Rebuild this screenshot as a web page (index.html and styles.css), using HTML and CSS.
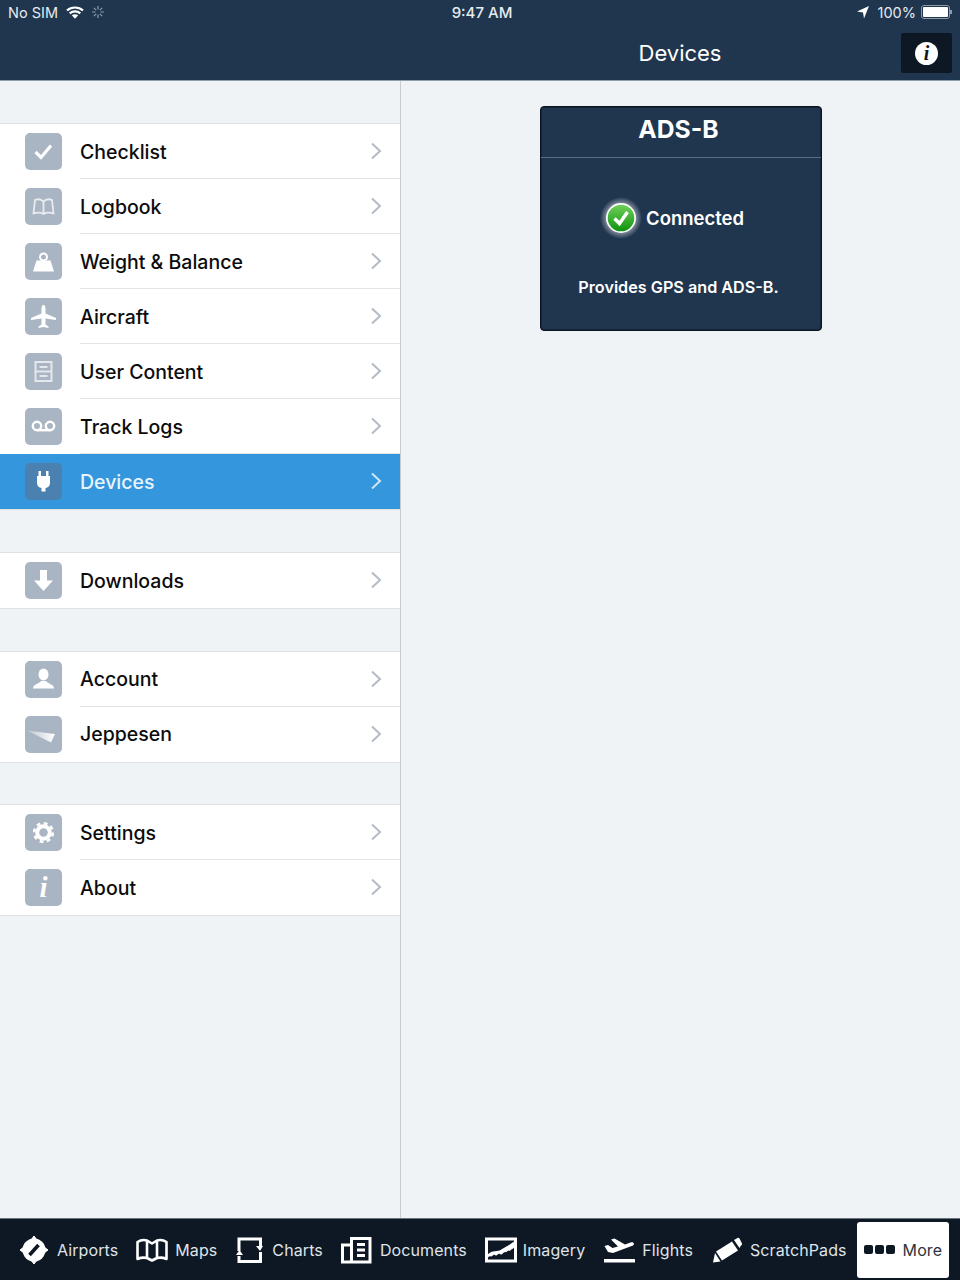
FILE: index.html
```html
<!DOCTYPE html>
<html>
<head>
	<meta charset="utf-8"/>
	<title>Devices</title>
	<link rel="stylesheet" href="styles.css">
</head>
<body>
	<div class="topbar">
		<div class="status">
			<div class="status-left">
				<span>No SIM</span>
				<svg class="wifi" width="18" height="13" viewBox="0 0 18 13"><path d="M1 4.500C5.500 .5 12.500 .5 17 4.500M3.700 7.300C6.700 4.800 11.300 4.800 14.300 7.300" fill="none" stroke="#fff" stroke-width="2.200"/><path d="M5.800 9.300C7.800 7.800 10.200 7.800 12.200 9.300L9 12.800Z" fill="#fff"/></svg>
				<svg class="spinner" width="14" height="14" viewBox="0 0 14 14"><path d="M7 1V4.500M7 9.500V13M1 7H4.500M9.500 7H13M2.800 2.800L5.200 5.200M8.800 8.800L11.200 11.200M2.800 11.200L5.200 8.800M8.800 5.200L11.200 2.800" fill="none" stroke="#8b9aaa" stroke-width="1.200"/></svg>
			</div>
			<div class="status-time">9:47 AM</div>
			<div class="status-right">
				<svg width="14" height="14" viewBox="0 0 14 14"><path d="M13 1L1 6.500L7 7.500L8 13.500Z" fill="#fff"/></svg>
				<span>100%</span>
				<div class="battery"><div class="battery-fill"></div></div>
			</div>
		</div>
		<div class="navbar">
			<div class="nav-pane">
				<div></div>
				<div class="nav-title">Devices</div>
				<div class="info-btn"><span class="info-dot">i</span></div>
			</div>
		</div>
	</div>

	<div class="main">
		<div class="sidebar">
			<div class="group">
				<div class="row">
					<div class="tile"><svg width="37" height="37" viewBox="0 0 37 37"><path d="M10.500 19L16 24.500L26 12.500" fill="none" stroke="#fff" stroke-width="3.200"/></svg></div>
					<div class="label">Checklist</div>
					<svg class="chev" width="12" height="18" viewBox="0 0 12 18"><path d="M2 1.500L10 9L2 16.500" fill="none" stroke="#b3bbc5" stroke-width="2"/></svg>
				</div>
				<div class="row">
					<div class="tile"><svg width="37" height="37" viewBox="0 0 37 37"><path d="M18.500 13.500C16 11 12.500 11 10 12L8.500 25.500C12 24.500 16 24.500 18.500 26C21 24.500 25 24.500 28.500 25.500L27 12C24.500 11 21 11 18.500 13.500ZM18.500 13.500V26" fill="none" stroke="#e8ebef" stroke-width="1.800"/></svg></div>
					<div class="label">Logbook</div>
					<svg class="chev" width="12" height="18" viewBox="0 0 12 18"><path d="M2 1.500L10 9L2 16.500" fill="none" stroke="#b3bbc5" stroke-width="2"/></svg>
				</div>
				<div class="row">
					<div class="tile"><svg width="37" height="37" viewBox="0 0 37 37"><circle cx="18.500" cy="14" r="3.500" fill="none" stroke="#fff" stroke-width="2"/><path d="M11.500 17.500H25.500L29 28.500H8Z" fill="#fff"/></svg></div>
					<div class="label">Weight &amp; Balance</div>
					<svg class="chev" width="12" height="18" viewBox="0 0 12 18"><path d="M2 1.500L10 9L2 16.500" fill="none" stroke="#b3bbc5" stroke-width="2"/></svg>
				</div>
				<div class="row">
					<div class="tile"><svg width="37" height="37" viewBox="0 0 37 37"><path d="M18.500 7C20 7 20.500 9 20.500 11V15.500L31 20V22L20.500 20.500V26.500L23.500 28.500V30L18.500 29L13.500 30V28.500L16.500 26.500V20.500L6 22V20L16.500 15.500V11C16.500 9 17 7 18.500 7Z" fill="#fff"/></svg></div>
					<div class="label">Aircraft</div>
					<svg class="chev" width="12" height="18" viewBox="0 0 12 18"><path d="M2 1.500L10 9L2 16.500" fill="none" stroke="#b3bbc5" stroke-width="2"/></svg>
				</div>
				<div class="row">
					<div class="tile"><svg width="37" height="37" viewBox="0 0 37 37"><rect x="10.500" y="9" width="16" height="19" fill="none" stroke="#e4e8ec" stroke-width="2"/><path d="M10.500 18.500H26.500M14.500 14H22.500M14.500 23H22.500" fill="none" stroke="#e4e8ec" stroke-width="1.800"/></svg></div>
					<div class="label">User Content</div>
					<svg class="chev" width="12" height="18" viewBox="0 0 12 18"><path d="M2 1.500L10 9L2 16.500" fill="none" stroke="#b3bbc5" stroke-width="2"/></svg>
				</div>
				<div class="row">
					<div class="tile"><svg width="37" height="37" viewBox="0 0 37 37"><circle cx="12" cy="18" r="4.200" fill="none" stroke="#fff" stroke-width="2.400"/><circle cx="25" cy="18" r="4.200" fill="none" stroke="#fff" stroke-width="2.400"/><path d="M12 22.200H25" stroke="#fff" stroke-width="2.400"/></svg></div>
					<div class="label">Track Logs</div>
					<svg class="chev" width="12" height="18" viewBox="0 0 12 18"><path d="M2 1.500L10 9L2 16.500" fill="none" stroke="#b3bbc5" stroke-width="2"/></svg>
				</div>
				<div class="row selected">
					<div class="tile"><svg width="37" height="37" viewBox="0 0 37 37"><path d="M13.500 8H16V13H21V8H23.500V13H25V20C25 23 23 24.500 20.500 25V28.500H16.500V25C14 24.500 12 23 12 20V13H13.500Z" fill="#fff"/></svg></div>
					<div class="label">Devices</div>
					<svg class="chev" width="12" height="18" viewBox="0 0 12 18"><path d="M2 1.500L10 9L2 16.500" fill="none" stroke="#cfe6f7" stroke-width="2"/></svg>
				</div>
			</div>

			<div class="group">
				<div class="row">
					<div class="tile"><svg width="37" height="37" viewBox="0 0 37 37"><path d="M15 8H22V18.500H28L18.500 29L9 18.500H15Z" fill="#fff"/></svg></div>
					<div class="label">Downloads</div>
					<svg class="chev" width="12" height="18" viewBox="0 0 12 18"><path d="M2 1.500L10 9L2 16.500" fill="none" stroke="#b3bbc5" stroke-width="2"/></svg>
				</div>
			</div>

			<div class="group group-tight">
				<div class="row">
					<div class="tile"><svg width="37" height="37" viewBox="0 0 37 37"><ellipse cx="18.500" cy="13.500" rx="5" ry="6" fill="#fff"/><path d="M8 27.500C8 23 14 23 16 20H21C23 23 29 23 29 27.500Z" fill="#fff"/></svg></div>
					<div class="label">Account</div>
					<svg class="chev" width="12" height="18" viewBox="0 0 12 18"><path d="M2 1.500L10 9L2 16.500" fill="none" stroke="#b3bbc5" stroke-width="2"/></svg>
				</div>
				<div class="row">
					<div class="tile"><svg width="37" height="37" viewBox="0 0 37 37"><defs><linearGradient id="swoosh" x1="0" y1="0" x2="1" y2="0"><stop offset="0" stop-color="#fff" stop-opacity="0.25"/><stop offset="1" stop-color="#fff"/></linearGradient></defs><path d="M2 14.500L30 18L26 26.500Z" fill="url(#swoosh)"/></svg></div>
					<div class="label">Jeppesen</div>
					<svg class="chev" width="12" height="18" viewBox="0 0 12 18"><path d="M2 1.500L10 9L2 16.500" fill="none" stroke="#b3bbc5" stroke-width="2"/></svg>
				</div>
			</div>

			<div class="group">
				<div class="row">
					<div class="tile"><svg width="37" height="37" viewBox="0 0 37 37"><circle cx="18.500" cy="18.500" r="6.300" fill="none" stroke="#fff" stroke-width="4"/><circle cx="18.500" cy="18.500" r="9.300" fill="none" stroke="#fff" stroke-width="2.600" stroke-dasharray="3.800 3.500"/></svg></div>
					<div class="label">Settings</div>
					<svg class="chev" width="12" height="18" viewBox="0 0 12 18"><path d="M2 1.500L10 9L2 16.500" fill="none" stroke="#b3bbc5" stroke-width="2"/></svg>
				</div>
				<div class="row">
					<div class="tile"><span class="tile-i">i</span></div>
					<div class="label">About</div>
					<svg class="chev" width="12" height="18" viewBox="0 0 12 18"><path d="M2 1.500L10 9L2 16.500" fill="none" stroke="#b3bbc5" stroke-width="2"/></svg>
				</div>
			</div>
		</div>

		<div class="content">
			<div class="card">
				<div class="card-title">ADS-B</div>
				<div class="card-state">
					<svg class="state-icon" width="42" height="42" viewBox="0 0 42 42"><defs><radialGradient id="glow"><stop offset="0.6" stop-color="#fff" stop-opacity="0.55"/><stop offset="1" stop-color="#fff" stop-opacity="0"/></radialGradient><linearGradient id="ball" x1="0" y1="0" x2="0" y2="1"><stop offset="0" stop-color="#6fd05a"/><stop offset="1" stop-color="#0f930f"/></linearGradient></defs><circle cx="21" cy="21" r="21" fill="url(#glow)"/><circle cx="21" cy="21" r="15" fill="#fff"/><circle cx="21" cy="21" r="13.300" fill="url(#ball)"/><path d="M14.500 21.500L19.500 26.500L27.500 15" fill="none" stroke="#fff" stroke-width="3.400"/></svg>
					<span>Connected</span>
				</div>
				<div class="card-note">Provides GPS and ADS-B.</div>
			</div>
		</div>
	</div>

	<div class="tabbar">
		<div class="tab">
			<svg width="30" height="30" viewBox="0 0 30 30"><circle cx="15" cy="15" r="11.500" fill="#fff"/><path d="M15 1L18 5H12ZM15 29L18 25H12ZM1 15L5 12V18ZM29 15L25 12V18Z" fill="#fff" stroke="#fff" stroke-linejoin="round"/><path d="M10.500 20L19.500 10" stroke="#0e1824" stroke-width="3.600"/></svg>
			<span>Airports</span>
		</div>
		<div class="tab tab-maps">
			<svg width="32" height="24" viewBox="0 0 32 24"><path d="M1.500 4Q6 1 11 2.500L16 5.500L21 2.500Q26 1 30.500 4V21Q26 19 21 20L16 22.500L11 20Q6 19 1.500 21ZM11 2.500V20M21 2.500V20" fill="none" stroke="#fff" stroke-width="2.600" stroke-linejoin="round"/></svg>
			<span>Maps</span>
		</div>
		<div class="tab tab-charts">
			<svg width="28" height="28" viewBox="0 0 28 28"><path d="M4 15V3H25.500V10M25.500 16V25.500H4V20" fill="none" stroke="#fff" stroke-width="3"/><path d="M21 10H28L25 15ZM1 19H8L4.500 14Z" fill="#fff"/></svg>
			<span>Charts</span>
		</div>
		<div class="tab tab-docs">
			<svg width="32" height="28" viewBox="0 0 32 28"><path d="M11 9H2.500V26H30V2.500H11.500V26M17 8.500H25M17 14H25M17 19.500H25" fill="none" stroke="#fff" stroke-width="3"/></svg>
			<span>Documents</span>
		</div>
		<div class="tab tab-imagery">
			<svg width="32" height="26" viewBox="0 0 32 26"><rect x="1.500" y="2" width="29" height="22" fill="none" stroke="#fff" stroke-width="3"/><path d="M2 18C8 12 12 16 17 12C21 10 24 8 30 4V9C28 13 27 11 25 14C23 12 22 16 20 15C18 15 17 19 15 17C13 16 12 20 10 18C8 17 7 21 5 19L2 21Z" fill="#fff"/></svg>
			<span>Imagery</span>
		</div>
		<div class="tab tab-flights">
			<svg width="32" height="28" viewBox="0 0 32 28"><path d="M1.500 10L5 9L9.500 12L15 10.500L8 3.500L11.500 2.500L22 8.500L27.500 6.500C30.500 5.500 32 8 30 9.500L10 17L5 16Z" fill="#fff"/><rect x="1" y="23" width="31" height="3.500" fill="#fff"/></svg>
			<span>Flights</span>
		</div>
		<div class="tab tab-scratch">
			<svg width="30" height="26" viewBox="0 0 30 26"><path d="M4 14.500L20 4.500L26 13.500L10 23.500ZM22 3L25.500 1C26.500 .5 27 1 27.500 1.500L30 6.500C30 7.500 30 8 29 8.500L27.500 11ZM3 16L8.500 24.500L1 25.500Z" fill="#fff"/></svg>
			<span>ScratchPads</span>
		</div>
		<div class="tab more">
			<div class="dots"><i></i><i></i><i></i></div>
			<span>More</span>
		</div>
	</div>
</body>
</html>
```

FILE: styles.css
```css
html, body { height:100%; overflow:hidden; }
body { margin:0; display:flex; flex-direction:column; background:#f0f3f6; font-family:Inter,"Liberation Sans",sans-serif; color:#fff; }

.topbar { background:#20364f; height:80px; border-bottom:1px solid #929daa; flex:none; }
.status { height:26px; box-sizing:border-box; display:grid; grid-template-columns:1fr auto 1fr; align-items:center; padding:0 7px 2px 8px; font-size:14.5px; color:#e6ebf0; }
.status-left { display:flex; align-items:center; gap:8px; }
.status-left .spinner { margin-left:-1px; }
.status-time { font-weight:500; font-size:15px; margin-left:3px; }
.status-right { display:flex; align-items:center; justify-content:flex-end; gap:7px; }
.status-right span { margin-left:1px; margin-right:-2px; }
.battery { width:29px; height:14px; border:1px solid #8c9aa9; border-radius:3px; padding:1px; box-sizing:border-box; margin-right:3px; position:relative; }
.battery:after { content:""; position:absolute; right:-3px; top:4px; width:2px; height:4px; background:#8c9aa9; }
.battery-fill { height:100%; background:#fff; border-radius:1px; }

.navbar { height:54px; display:flex; justify-content:flex-end; }
.nav-pane { width:560px; display:grid; grid-template-columns:1fr auto 1fr; align-items:center; }
.nav-title { font-size:22px; }
.info-btn { justify-self:end; margin-right:8px; width:51px; height:40px; background:#0e1824; border-radius:2px; display:flex; align-items:center; justify-content:center; }
.info-dot { width:23px; height:23px; border-radius:50%; background:#fff; color:#0e1824; font:italic bold 20px/23px "Liberation Serif",serif; text-align:center; }

.main { flex:1; display:flex; min-height:0; }
.sidebar { width:400px; border-right:1px solid #c6cdd4; flex:none; padding-top:42px; }
.group { background:#fff; border-top:1px solid #dde1e5; border-bottom:1px solid #dde1e5; margin-bottom:42px; }
.group-tight { margin-bottom:41px; }
.group-tight .label { line-height:55px; }
.row { height:55px; display:flex; align-items:center; padding-left:25px; padding-right:18px; box-sizing:border-box; }
.tile { width:37px; height:37px; background:#a9b5c3; border-radius:5px; flex:none; display:flex; align-items:center; justify-content:center; }
.tile svg { display:block; }
.tile-i { color:#fff; font:italic bold 29px/37px "Liberation Serif",serif; }
.label { flex:1; margin-left:18px; font-size:19.5px; font-weight:500; color:#0c0c0c; height:55px; line-height:57px; border-bottom:1px solid #e1e4e7; box-sizing:border-box; margin-right:-18px; }
.row:last-child .label { border-bottom:none; }
.chev { flex:none; margin-left:-12px; margin-bottom:2px; }
.row.selected { background:#3497dd; }
.row.selected .tile { background:#4a81b0; }
.row.selected .label { color:#e8f4fc; border-bottom:none; }

.content { flex:1; padding:25px 0 0 139px; }
.card { width:282px; height:225px; box-sizing:border-box; background:#20364f; border:1px solid #0b1522; box-shadow:inset 0 0 0 1px #15253a; border-radius:4px; text-align:center; }
.card-title { height:50px; line-height:44px; font-size:24.7px; font-weight:700; border-bottom:1px solid #56708a; padding-right:5px; }
.card-state { display:flex; align-items:center; margin-top:39px; padding-left:59px; font-size:18.5px; font-weight:600; height:42px; gap:4px; }
.card-note { margin-top:38px; font-size:16.2px; font-weight:600; padding-right:5px; }

.tabbar { height:62px; box-sizing:border-box; flex:none; background:#0e1824; border-top:1px solid #6c7680; display:flex; align-items:center; padding-left:19px; gap:18px; font-size:16px; letter-spacing:.1px; color:#dfe4e9; }
.tab { display:flex; align-items:center; gap:8px; }
.tab svg { display:block; flex:none; }
.tab-maps { gap:7px; }
.tab-charts { gap:9px; }
.tab-docs { margin-left:-1px; }
.tab-imagery { gap:6px; }
.tab-flights { gap:7px; }
.tab-scratch { margin-left:1px; }
.tab.more { background:#fff; color:#2c3440; width:92px; height:56px; box-sizing:border-box; border-radius:3px; padding-left:7px; margin-left:-8px; }
.dots { display:flex; gap:2px; }
.dots i { width:9px; height:9px; background:#0e1824; border-radius:2px; }
```
